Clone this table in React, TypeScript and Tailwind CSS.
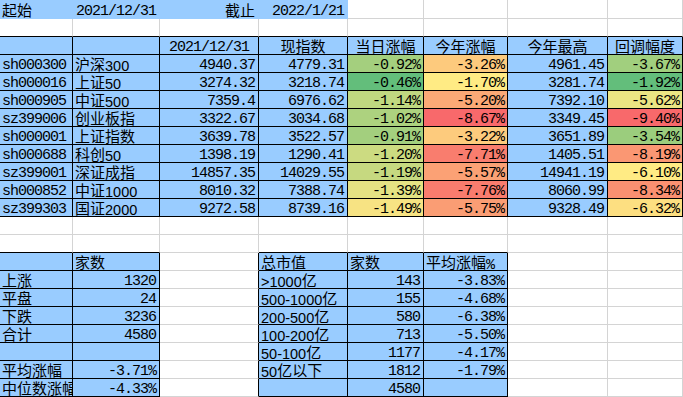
import React from "react";

type Cell = { t?: string; a?: "l" | "r" | "c"; k?: "mono" | "sans"; bg?: string };

const B = "bg-[#99ccff]";
const CJK = /([\u3000-\u303f\u4e00-\u9fff\uff00-\uffef]+)/;

function Txt({ s, k }: { s: string; k: "mono" | "sans" }) {
  const parts = s.split(CJK).filter((p) => p !== "");
  return (
    <span className="block whitespace-nowrap leading-[17px] h-[17px]">
      {parts.map((p, i) =>
        CJK.test(p) ? (
          <span key={i} className="font-['Noto_Sans_CJK_SC',sans-serif] text-[15px] leading-[17px] align-[1px]">
            {p}
          </span>
        ) : k === "mono" ? (
          <span key={i} className="font-['Liberation_Mono',monospace] text-[15px] tracking-[-1px] leading-[17px]">
            {p}
          </span>
        ) : (
          <span key={i} className="font-['Liberation_Sans',sans-serif] text-[14.5px] leading-[17px]">
            {p}
          </span>
        )
      )}
    </span>
  );
}

const E: Cell = {};
const data = [
  ["sh000300", "沪深300", "4940.37", "4779.31", "-0.92%", "-3.26%", "4961.45", "-3.67%"],
  ["sh000016", "上证50", "3274.32", "3218.74", "-0.46%", "-1.70%", "3281.74", "-1.92%"],
  ["sh000905", "中证500", "7359.4", "6976.62", "-1.14%", "-5.20%", "7392.10", "-5.62%"],
  ["sz399006", "创业板指", "3322.67", "3034.68", "-1.02%", "-8.67%", "3349.45", "-9.40%"],
  ["sh000001", "上证指数", "3639.78", "3522.57", "-0.91%", "-3.22%", "3651.89", "-3.54%"],
  ["sh000688", "科创50", "1398.19", "1290.41", "-1.20%", "-7.71%", "1405.51", "-8.19%"],
  ["sz399001", "深证成指", "14857.35", "14029.55", "-1.19%", "-5.57%", "14941.19", "-6.10%"],
  ["sh000852", "中证1000", "8010.32", "7388.74", "-1.39%", "-7.76%", "8060.99", "-8.34%"],
  ["sz399303", "国证2000", "9272.58", "8739.16", "-1.49%", "-5.75%", "9328.49", "-6.32%"],
];
const colE = ["bg-[#a4cf7e]", "bg-[#63be7b]", "bg-[#c0d880]", "bg-[#add27f]", "bg-[#a3cf7e]", "bg-[#ccdb81]", "bg-[#c6d980]", "bg-[#e5e283]", "bg-[#f7e383]"];
const colF = ["bg-[#fdca7d]", "bg-[#ffeb84]", "bg-[#fba976]", "bg-[#f8696b]", "bg-[#fdcb7d]", "bg-[#f97d6e]", "bg-[#fba175]", "bg-[#f97c6e]", "bg-[#fa9d74]"];
const colH = ["bg-[#a1cf7e]", "bg-[#63be7b]", "bg-[#ebe583]", "bg-[#f8696b]", "bg-[#9bcd7d]", "bg-[#fa9773]", "bg-[#ffeb84]", "bg-[#fa9071]", "bg-[#fddf81]"];

const rows: Cell[][] = [];
rows.push([
  { t: "起始", a: "l", bg: B },
  { t: "2021/12/31", a: "r", k: "mono", bg: B },
  { t: "截止", a: "r", bg: B },
  { t: "2022/1/21", a: "r", k: "mono", bg: B },
  E, E, E, E,
]);
rows.push([E, E, E, E, E, E, E, E]);
rows.push([
  { bg: B },
  { bg: B },
  { t: "2021/12/31", a: "c", k: "mono", bg: B },
  { t: "现指数", a: "c", bg: B },
  { t: "当日涨幅", a: "c", bg: B },
  { t: "今年涨幅", a: "c", bg: B },
  { t: "今年最高", a: "c", bg: B },
  { t: "回调幅度", a: "c", bg: B },
]);
data.forEach((d, i) => {
  rows.push([
    { t: d[0], a: "l", k: "mono", bg: B },
    { t: d[1], a: "l", k: "sans", bg: B },
    { t: d[2], a: "r", k: "mono", bg: B },
    { t: d[3], a: "r", k: "mono", bg: B },
    { t: d[4], a: "r", k: "mono", bg: colE[i] },
    { t: d[5], a: "r", k: "mono", bg: colF[i] },
    { t: d[6], a: "r", k: "mono", bg: B },
    { t: d[7], a: "r", k: "mono", bg: colH[i] },
  ]);
});
rows.push([E, E, E, E, E, E, E, E]);
rows.push([E, E, E, E, E, E, E, E]);

const left: [string, string][] = [
  ["", "家数"],
  ["上涨", "1320"],
  ["平盘", "24"],
  ["下跌", "3236"],
  ["合计", "4580"],
  ["", ""],
  ["平均涨幅", "-3.71%"],
  ["中位数涨幅", "-4.33%"],
];
const right: [string, string, string][] = [
  ["总市值", "家数", "平均涨幅%"],
  [">1000亿", "143", "-3.83%"],
  ["500-1000亿", "155", "-4.68%"],
  ["200-500亿", "580", "-6.38%"],
  ["100-200亿", "713", "-5.50%"],
  ["50-100亿", "1177", "-4.17%"],
  ["50亿以下", "1812", "-1.79%"],
  ["", "4580", ""],
];
for (let i = 0; i < 8; i++) {
  const hdr = i === 0;
  rows.push([
    { t: left[i][0], a: "l", k: "sans", bg: B },
    { t: left[i][1], a: hdr ? "l" : "r", k: "mono", bg: B },
    E,
    { t: right[i][0], a: "l", k: "sans", bg: B },
    { t: right[i][1], a: hdr ? "l" : "r", k: "mono", bg: B },
    { t: right[i][2], a: hdr ? "l" : "r", k: "mono", bg: B },
    E,
    E,
  ]);
}

const bordered = (r: number, c: number) => {
  if (c < 0 || c > 7 || r < 0 || r > 21) return false;
  if (r >= 2 && r <= 11) return true;
  if (r >= 14 && r <= 21 && (c <= 1 || (c >= 3 && c <= 5))) return true;
  return false;
};
const filled = (r: number, c: number) => {
  if (c < 0 || c > 7 || r < 0 || r > 21) return false;
  return !!rows[r][c].bg;
};

export default function App() {
  return (
    <div className="w-[683px] h-[397px] overflow-hidden bg-white text-black">
      <div className="grid grid-cols-[73px_87px_99px_89px_76px_84px_100px_75px] grid-rows-[19px_repeat(21,18px)]">
        {rows.map((row, r) =>
          row.map((cell, c) => {
            const rb = bordered(r, c) || bordered(r, c + 1)
              ? "border-r-black"
              : filled(r, c)
              ? "border-r-[#99ccff]"
              : "border-r-[#d4d4d4]";
            const bb = bordered(r, c) || bordered(r + 1, c)
              ? "border-b-black"
              : filled(r, c)
              ? "border-b-[#99ccff]"
              : "border-b-[#d4d4d4]";
            const al =
              cell.a === "r" ? "justify-end pr-[3px]" : cell.a === "c" ? "justify-center" : "justify-start pl-[2px]";
            return (
              <div
                key={r + "-" + c}
                className={`flex items-end overflow-hidden whitespace-nowrap border-r border-b min-w-0 ${al} ${rb} ${bb} ${cell.bg ?? "bg-white"}`}
              >
                {cell.t ? <Txt s={cell.t} k={cell.k ?? "sans"} /> : null}
              </div>
            );
          })
        )}
      </div>
    </div>
  );
}
